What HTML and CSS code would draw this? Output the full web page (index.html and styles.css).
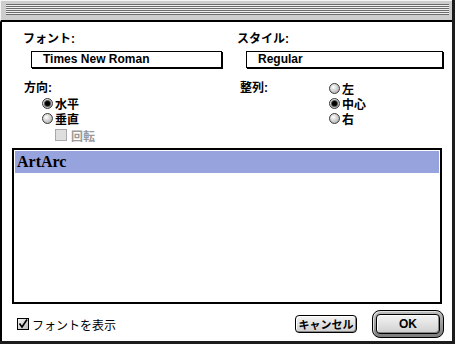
FILE: index.html
```html
<!DOCTYPE html>
<html>
<head lang="ja">
    <meta charset="UTF-8">
    <title>フォント</title>
    <link rel="stylesheet" href="styles.css">
</head>
<body>
<div class="window">
    <div class="titlebar"><div class="stripes"></div></div>
    <div class="content">
        <div class="fields">
            <div class="group">
                <div class="label">フォント:</div>
                <div class="textbox">Times New Roman</div>
            </div>
            <div class="group right">
                <div class="label">スタイル:</div>
                <div class="textbox">Regular</div>
            </div>
        </div>
        <div class="options">
            <div class="opt-col">
                <div class="label">方向:</div>
                <div class="choices dir">
                    <div class="choice"><span class="radio on"></span>水平</div>
                    <div class="choice"><span class="radio"></span>垂直</div>
                    <div class="choice sub disabled"><span class="box"></span>回転</div>
                </div>
            </div>
            <div class="opt-col align">
                <div class="label">整列:</div>
                <div class="choices">
                    <div class="choice"><span class="radio"></span>左</div>
                    <div class="choice"><span class="radio on"></span>中心</div>
                    <div class="choice"><span class="radio"></span>右</div>
                </div>
            </div>
        </div>
        <div class="list">
            <div class="item selected">ArtArc</div>
        </div>
        <div class="footer">
            <label class="show">
                <span class="box checked">
                    <svg width="10" height="10" viewBox="0 0 10 10"><path d="M1.5 4.5 L4 8 L9 0.5" fill="none" stroke="#000" stroke-width="1.6"/></svg>
                </span>フォントを表示
            </label>
            <a href="javascript:;" class="btn cancel">キャンセル</a>
            <div class="default-ring"><a href="javascript:;" class="btn ok">OK</a></div>
        </div>
    </div>
</div>
</body>
</html>
```

FILE: styles.css
```css
* { margin: 0; padding: 0; box-sizing: border-box; text-decoration: none; }
body { background: #fff; font-family: "Liberation Sans", "Noto Sans CJK JP", sans-serif; font-size: 12px; color: #000; }

.window { width: 455px; height: 344px; background: #fff;
    border-right: 3px solid #1c1c1c; border-bottom: 3px solid #1c1c1c;
    display: flex; flex-direction: column; }
.titlebar { height: 22px; background: #cdcdcd; border-top: 1px solid #f4f4f4;
    border-left: 1px solid #f4f4f4; border-bottom: 2px solid #000; padding: 3px 3px 0 5px; }
.stripes { height: 11px;
    background: repeating-linear-gradient(to bottom, #6b6b6b 0 1px, #efefef 1px 2px); }

.content { flex: 1; border-left: 2px solid #000; padding: 10px 10px 0 10px; }

.label { font-weight: bold; line-height: 14px; height: 14px; }

.fields { display: grid; grid-template-columns: 214px 1fr; }
.group .label { margin-left: 11px; }
.group .textbox { margin: 5px 0 0 19px; width: 191px; height: 17px; border: 1px solid #000;
    box-shadow: 1px 1px 0 #000; font-weight: bold; line-height: 15px; padding-left: 11px; }
.group.right .textbox { margin-left: 20px; width: 197px; }

.options { display: grid; grid-template-columns: 214px 1fr; margin-top: 13px; }
.options .label { line-height: 15px; height: 15px; }
.opt-col .label { margin-left: 12px; }
.choices.dir { margin-left: 30px; }
.choice { display: flex; align-items: center; height: 15px; font-weight: bold; }
.choice.sub { margin: 2px 0 0 13px; height: 14px; }
.choice.disabled { color: #9a9a9a; }

.opt-col.align { display: flex; }
.opt-col.align .label { margin-left: 14px; width: 89px; }

.radio { position: relative; width: 11px; height: 11px; border-radius: 50%; margin-right: 2px;
    border: 1px solid #3a3a3a;
    background: radial-gradient(circle at 38% 35%, #fff 0, #e2e2e2 30%, #9c9c9c 100%); }
.radio.on::after { content: ""; position: absolute; left: 2px; top: 2px; width: 5px; height: 5px;
    border-radius: 50%; background: #000; box-shadow: 0 0 0 1px #555; }

.box { display: inline-flex; align-items: center; justify-content: center;
    width: 12px; height: 12px; margin-right: 4px; }
.disabled .box { border: 1px solid #a8a8a8; background: #dedede; }

.list { margin-top: 6px; height: 156px; border: 2px solid #000; padding: 1px; }
.item { height: 22px; line-height: 22px; padding-left: 2px;
    font-family: "Liberation Serif", serif; font-weight: bold; font-size: 16px; }
.item.selected { background: #97a3dd; }

.footer { display: flex; align-items: center; height: 28px; margin-top: 6px; }
.show { display: flex; align-items: center; margin-left: 5px; }
.box.checked { border: 1px solid #000; margin-right: 3px;
    background: linear-gradient(135deg, #f2f2f2, #bdbdbd); }

.btn { display: flex; align-items: center; justify-content: center; color: #000; font-weight: bold;
    border: 1px solid #000; border-radius: 4px;
    background: linear-gradient(to bottom, #f4f4f4, #cfcfcf);
    box-shadow: inset -1px -1px 0 #888, inset 1px 1px 0 #fff; }
.cancel { margin-left: auto; width: 62px; height: 18px; font-size: 11px; }
.default-ring { margin: 0 -2px 0 15px; width: 72px; height: 28px; padding: 3px;
    border: 1px solid #000; border-radius: 8px;
    background: linear-gradient(to bottom, #bdbdbd, #7d7d7d);
    box-shadow: inset 1px 1px 0 #e0e0e0; }
.ok { width: 100%; height: 100%; font-size: 12px; }
```
